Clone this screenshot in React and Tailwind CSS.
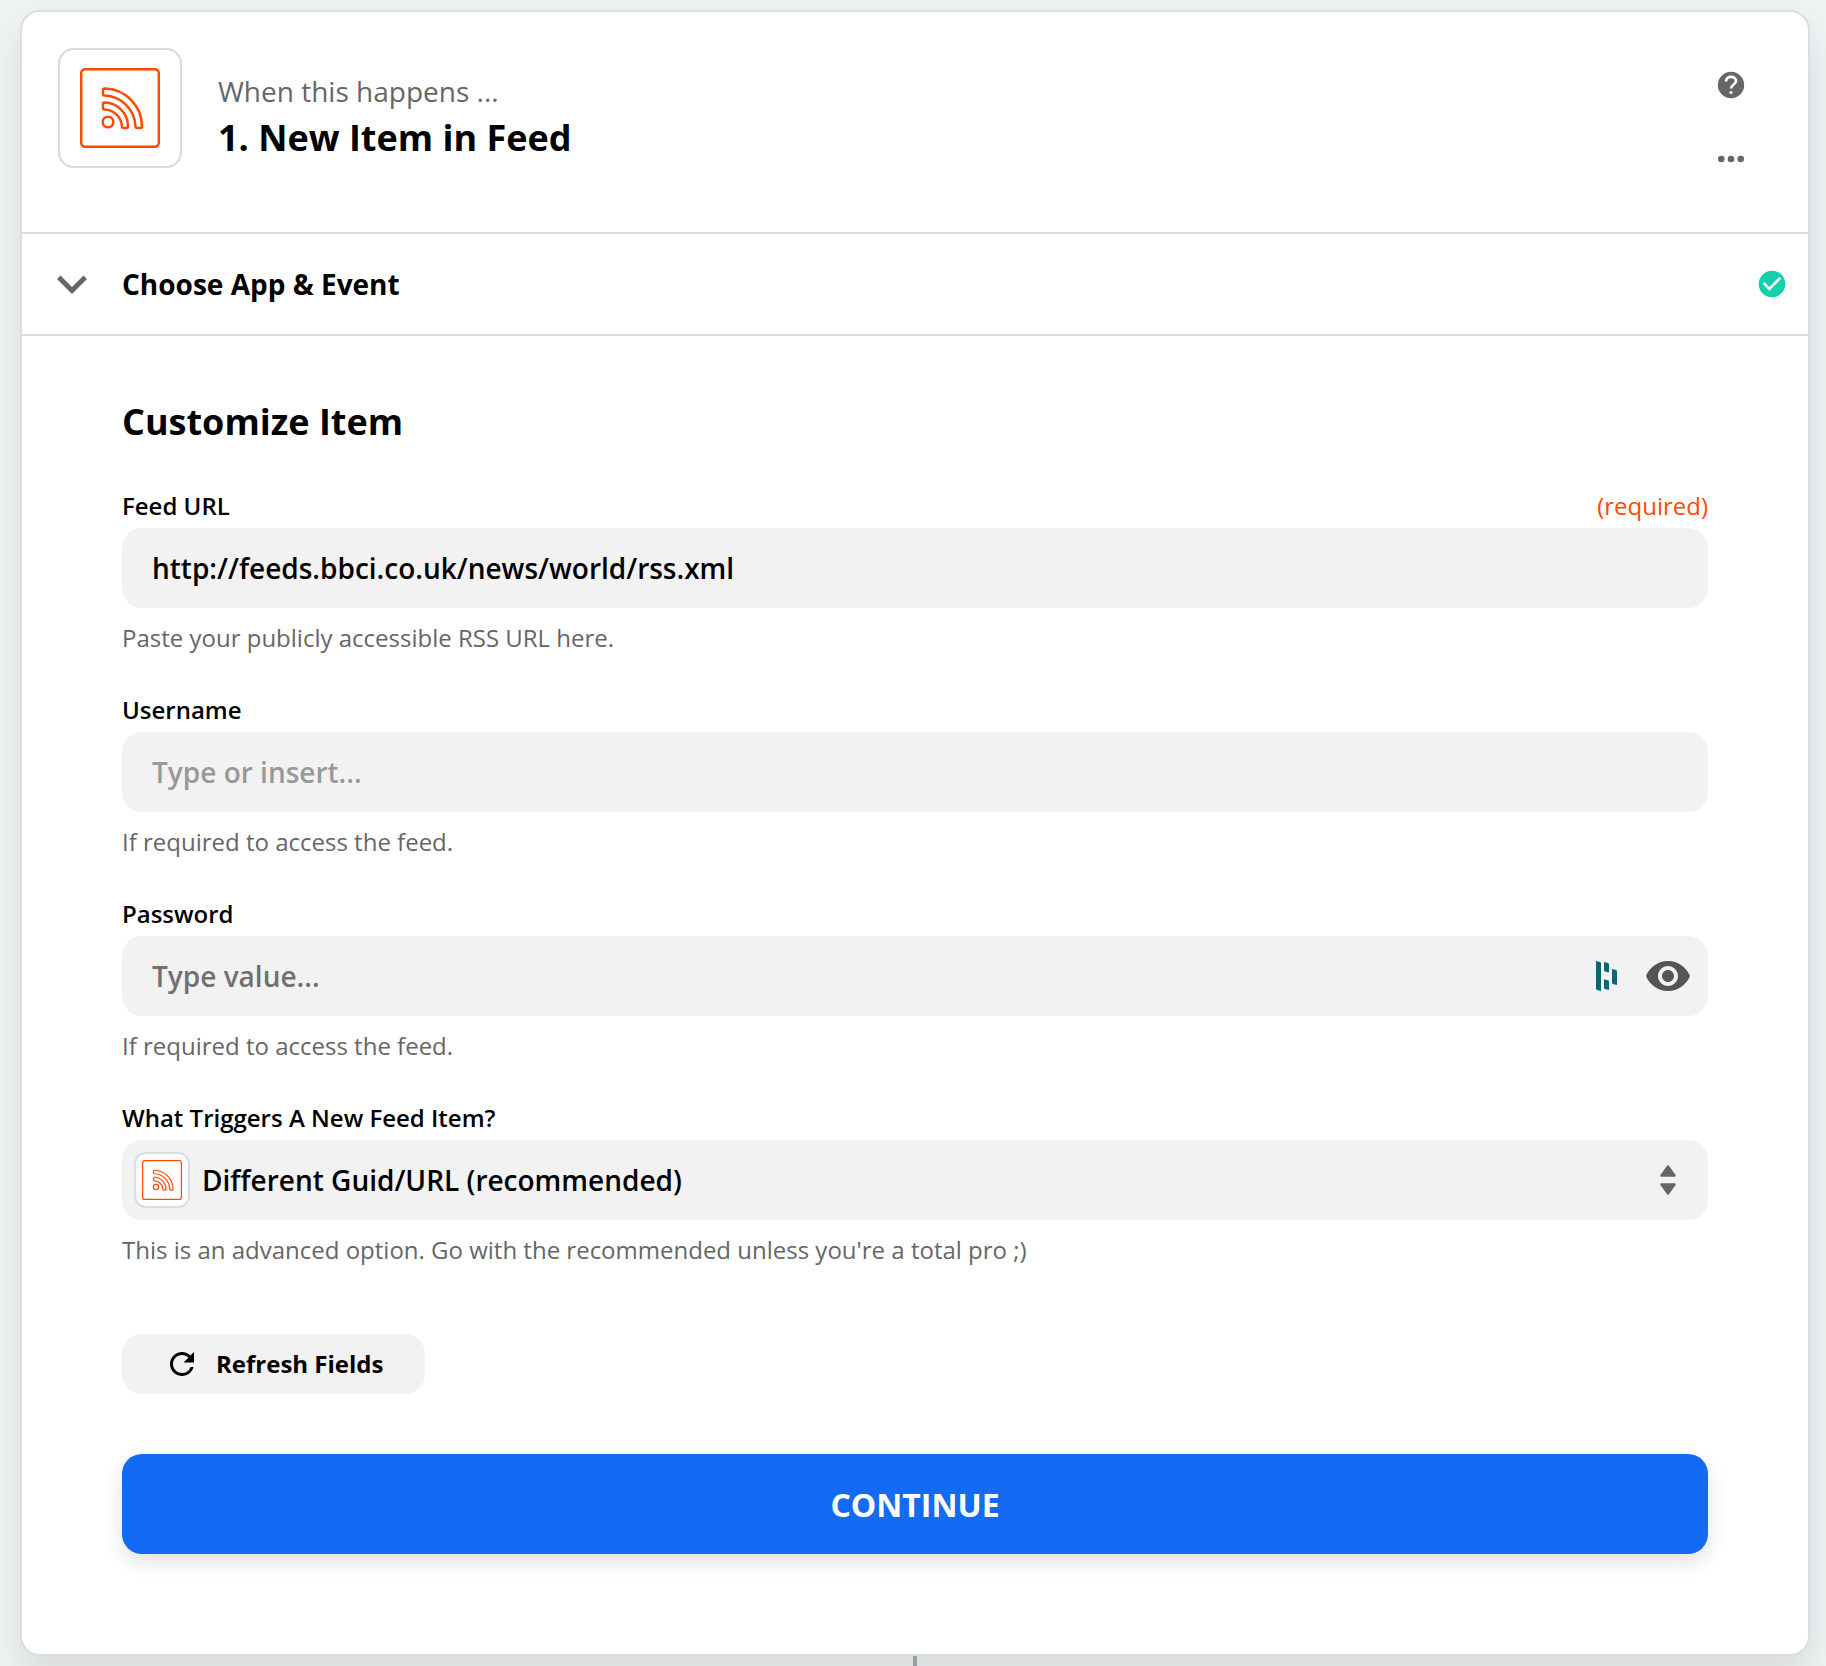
import React from "react";
import { MdExpandMore, MdCheckCircle, MdVisibility, MdRefresh } from "react-icons/md";

function RssLogo({ className }) {
  return (
    <svg className={className} viewBox="0 0 80 80" fill="none" stroke="#ff4a00" strokeWidth="2.5">
      <rect x="1.200" y="1.200" width="77.600" height="77.600" rx="4" />
      <circle cx="28" cy="54" r="5.3" />
      <path d="M24.500 20.500 A38 38 0 0 1 62 58.500 Q62 60 60.500 60 H57 Q55.600 60 55.500 58.500 A32 32 0 0 0 24.500 27.500 Q23 27.400 23 26 V22 Q23 20.500 24.500 20.500 Z" strokeLinejoin="round" />
      <path d="M24.500 34.500 A24 24 0 0 1 48 58.500 Q48 60 46.500 60 H43.500 Q42 60 42 58.500 A18 18 0 0 0 24.500 41.500 Q23 41.500 23 40 V36 Q23 34.500 24.500 34.500 Z" strokeLinejoin="round" />
    </svg>
  );
}

function HelpIcon({ className }) {
  return (
    <svg className={className} viewBox="0 0 32 32" fill="none">
      <circle cx="16" cy="16" r="13.200" fill="#666" />
      <path d="M11 12.400 C11 9.500 13.200 7.900 16 7.900 C18.800 7.900 21 9.600 21 12.200 C21 15.500 16.100 15.700 16.100 19.600" stroke="#fff" strokeWidth="2.700" />
      <circle cx="16" cy="23.500" r="1.600" fill="#fff" />
    </svg>
  );
}

function Field({ label, required, hint, children }) {
  return (
    <div className="mb-9">
      <div className="mb-1 flex justify-between text-[24px] leading-[36px]">
        <span className="font-semibold">{label}</span>
        {required && <span className="text-[#ff4a00]">(required)</span>}
      </div>
      <div className="flex h-20 items-center rounded-[20px] bg-[#f2f2f2] text-[28px] font-semibold">{children}</div>
      <p className="mt-3 text-[24px] leading-[36px] text-[#666]">{hint}</p>
    </div>
  );
}

export default function App() {
  return (
    <div className="h-[1666px] w-[1826px] overflow-hidden bg-[#eff3f4] pt-[10px] pl-5 font-['Open_Sans',sans-serif] text-black">
      <div className="h-[1646px] w-[1790px] rounded-[20px] border-2 border-[#d9dee0] bg-white shadow-[0_20px_40px_rgba(0,0,0,0.1)]">
        <header className="flex h-[222px] border-b-2 border-[#d9dee0] pt-9 pl-9">
          <div className="flex h-[120px] w-[124px] items-center justify-center rounded-[16px] border-2 border-[#d9d9d9]">
            <RssLogo className="size-20" />
          </div>
          <div className="ml-9 flex-1 pt-[22px]">
            <p className="text-[28px] leading-[42px] text-[#666]">When this happens ...</p>
            <h1 className="text-[36px] leading-[52px] font-bold">1. New Item in Feed</h1>
          </div>
          <div className="mr-[61px] flex w-8 flex-col items-center pt-[21px]">
            <HelpIcon className="size-8 shrink-0" />
            <svg className="mt-[54px] h-2 w-8 shrink-0 fill-[#666]" viewBox="0 0 32 8">
              <circle cx="6.300" cy="4" r="3.300" />
              <circle cx="16" cy="4" r="3.300" />
              <circle cx="25.700" cy="4" r="3.300" />
            </svg>
          </div>
        </header>
        <section className="flex h-[102px] items-center border-b-2 border-[#d9dee0] pr-5 pl-5">
          <MdExpandMore className="size-[60px] text-[#666]" />
          <h2 className="ml-5 flex-1 text-[28px] font-bold">Choose App &amp; Event</h2>
          <MdCheckCircle className="size-8 text-[#13d0ac]" />
        </section>
        <main className="px-[100px] pt-[60px]">
          <h2 className="mb-10 text-[36px] leading-[52px] font-bold">Customize Item</h2>
          <Field label="Feed URL" required hint="Paste your publicly accessible RSS URL here.">
            <span className="pl-[30px]">http://feeds.bbci.co.uk/news/world/rss.xml</span>
          </Field>
          <Field label="Username" hint="If required to access the feed.">
            <span className="pl-[30px] text-[#999]">Type or insert...</span>
          </Field>
          <Field label="Password" hint="If required to access the feed.">
            <span className="flex-1 pl-[30px] text-[#717171]">Type value...</span>
            <svg className="mr-[27px] h-[30px] w-[21px] fill-[#0e6377]" viewBox="0 0 21 30">
              <path d="M0 0 L4 1 Q5 1.300 5 2.200 V30 L1 29 Q0 28.700 0 27.800 Z" />
              <path d="M8 1 L12 2 Q13 2.300 13 3.200 V11.500 L9 10.500 Q8 10.200 8 9.300 Z" />
              <path d="M8 18.300 L12 19.300 Q13 19.600 13 20.500 V29 L9 28 Q8 27.700 8 26.800 Z" />
              <path d="M16 8 L20 9 Q21 9.300 21 10.200 V24 L17 23 Q16 22.700 16 21.800 Z" />
            </svg>
            <MdVisibility className="mr-4 size-12 text-[#555]" />
          </Field>
          <Field label="What Triggers A New Feed Item?" hint="This is an advanced option. Go with the recommended unless you're a total pro ;)">
            <div className="ml-3 flex size-14 items-center justify-center rounded-[12px] border-2 border-[#d9dee0] bg-white">
              <RssLogo className="size-10" />
            </div>
            <span className="ml-3 flex-1">Different Guid/URL (recommended)</span>
            <svg className="mr-8 h-[30px] w-4 fill-[#666] stroke-[#666]" viewBox="0 0 16 30" strokeWidth="2.400" strokeLinejoin="round">
              <path d="M8 1.400 L14.600 10.600 H1.400 Z" />
              <path d="M8 28.600 L14.600 19.400 H1.400 Z" />
            </svg>
          </Field>
          <button className="mt-[66px] flex h-[60px] items-center gap-4 rounded-[20px] bg-[#f2f2f2] px-[42px] text-[24px] font-bold">
            <MdRefresh className="size-9" />
            Refresh Fields
          </button>
          <button className="mt-[60px] h-[100px] w-full rounded-[20px] bg-[#136bf5] pt-0.5 text-[32px] font-bold text-white shadow-[0_8px_20px_rgba(0,0,0,0.12)]">
            CONTINUE
          </button>
        </main>
      </div>
      <div className="ml-[893px] h-[10px] w-1 bg-[#95a0a5]" />
    </div>
  );
}
